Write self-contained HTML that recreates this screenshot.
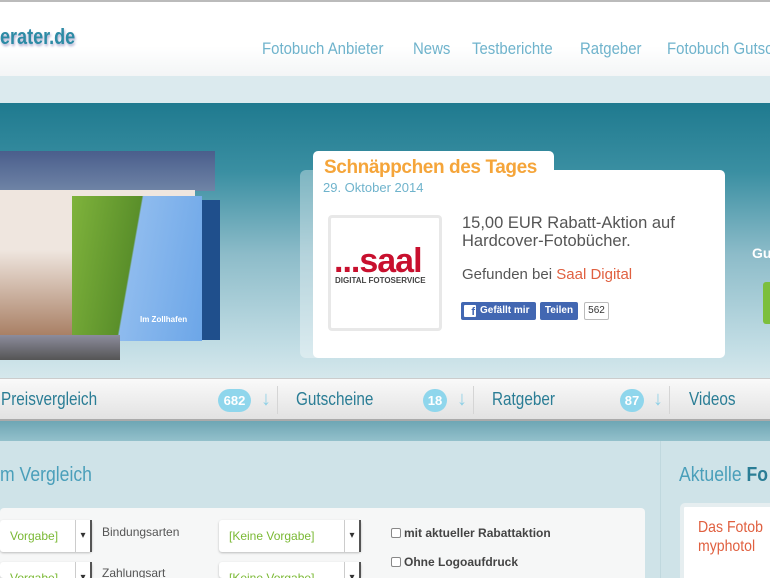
<!DOCTYPE html>
<html style="overflow:hidden"><head><meta charset="utf-8"><style>
*{margin:0;padding:0;box-sizing:border-box}
body{width:770px;height:578px;overflow:hidden;position:relative;font-family:"Liberation Sans",sans-serif;background:#cfe3e8}
.a{position:absolute}
.hdr{left:0;top:0;width:770px;height:76px;background:linear-gradient(#fff 60%,#f3f5f6);border-top:2px solid #bbb}
.band{left:0;top:76px;width:770px;height:27px;background:#dbeaee}
.hero{left:0;top:103px;width:770px;height:276px;background:linear-gradient(#1f7a8f 0%,#3a8fa2 25%,#8dbcc9 55%,#c5dfe6 90%,#d6e8ec 100%)}
.nav{left:0;top:378px;width:770px;height:43px;background:linear-gradient(#fafafa,#e2e2e2);border-top:1px solid #ccc;border-bottom:2px solid #aaa}
.tband{left:0;top:421px;width:770px;height:20px;background:linear-gradient(#6ea6b4,#93c0cb)}
.nl{color:#6fb3cc;font-size:17px;top:39px;white-space:nowrap;transform:scaleX(.88);transform-origin:0 0}
.ni{color:#2a7d95;font-size:18px;top:389px;white-space:nowrap;transform:scaleX(.85);transform-origin:0 0}
.badge{top:389px;height:23px;background:#8fd6ec;color:#fff;border-radius:12px;font-size:13px;font-weight:bold;text-align:center;line-height:23px}
.arr{top:388px;color:#8fd0e6;font-size:20px}
.sep{top:386px;width:1px;height:28px;background:#d5d5d5}
.sel{height:32px;background:#fff;border-radius:3px;box-shadow:0 1px 2px #bbb;color:#7ab934;font-size:12px;line-height:32px;padding-left:10px}
.sel:after{content:"▾";position:absolute;right:0;top:0;width:14px;height:32px;border-left:1px solid #ccc;border-right:2px solid #555;color:#333;font-size:10px;text-align:center}
.hd{color:#4a9fba;font-size:20px;top:464px;white-space:nowrap;transform:scaleX(.88);transform-origin:0 0}
</style></head><body>
<div class="a hdr"></div>
<div class="a" style="left:0;top:24px;font-weight:bold;font-size:22px;color:#2d8ba5;text-shadow:1px 2px 3px #aac;transform:scaleX(.82);transform-origin:0 0">erater.de</div>
<div class="a nl" style="left:262px">Fotobuch Anbieter</div>
<div class="a nl" style="left:413px">News</div>
<div class="a nl" style="left:472px">Testberichte</div>
<div class="a nl" style="left:580px">Ratgeber</div>
<div class="a nl" style="left:667px">Fotobuch Gutscheine</div>
<div class="a band"></div>
<div class="a hero"></div>
<div class="a" style="left:0;top:151px;width:215px;height:40px;background:linear-gradient(#4a5e8c,#6f84a6);"></div>
<div class="a" style="left:0;top:190px;width:195px;height:150px;background:linear-gradient(#efe6df 40%,#a57a5e)"></div>
<div class="a" style="left:72px;top:196px;width:130px;height:145px;background:linear-gradient(100deg,#7fb33c 0,#5a8f2a 45%,#8ebbee 46%,#6ca6e8 100%)"></div>
<div class="a" style="left:202px;top:200px;width:18px;height:140px;background:#1f4f8c"></div>
<div class="a" style="left:0;top:335px;width:120px;height:25px;background:linear-gradient(#8c8c9c,#555)"></div>
<div class="a" style="left:140px;top:315px;color:#fff;font-size:8px;font-weight:bold">Im Zollhafen</div>
<div class="a" style="left:300px;top:170px;width:28px;height:188px;background:rgba(255,255,255,.35);border-radius:6px"></div>
<div class="a" style="left:313px;top:170px;width:412px;height:188px;background:#fff;border-radius:5px"></div>
<div class="a" style="left:313px;top:151px;width:241px;height:30px;background:#fff;border-radius:5px 5px 0 0"></div>
<div class="a" style="left:324px;top:157px;color:#f5a53a;font-size:19px;font-weight:bold;letter-spacing:-.4px">Schnäppchen des Tages</div>
<div class="a" style="left:323px;top:180px;color:#6fb3cc;font-size:13px">29. Oktober 2014</div>
<div class="a" style="left:328px;top:215px;width:114px;height:116px;border:3px solid #e8e8e8;border-radius:4px;background:#fff"></div>
<div class="a" style="left:334px;top:244px;color:#c8102e;font-size:34px;font-weight:bold;letter-spacing:-1px;line-height:34px">...saal</div>
<div class="a" style="left:335px;top:276px;color:#444;font-size:8px;font-weight:bold">DIGITAL FOTOSERVICE</div>
<div class="a" style="left:462px;top:214px;color:#555;font-size:16.5px;line-height:18px">15,00 EUR Rabatt-Aktion auf<br>Hardcover-Fotobücher.</div>
<div class="a" style="left:462px;top:266px;color:#555;font-size:15px">Gefunden bei <span style="color:#e06040">Saal Digital</span></div>
<div class="a" style="left:461px;top:302px;width:75px;height:18px;background:#4267b2;border-radius:2px;color:#fff;font-size:10px;font-weight:bold;line-height:18px;padding-left:19px">Gefällt mir</div>
<div class="a" style="left:464px;top:305px;width:12px;height:12px;background:#fff;border-radius:1px;color:#4267b2;font-size:11px;font-weight:bold;line-height:14px;text-align:right;padding-right:1px">f</div>
<div class="a" style="left:540px;top:302px;width:38px;height:18px;background:#4267b2;border-radius:2px;color:#fff;font-size:10px;font-weight:bold;line-height:18px;text-align:center">Teilen</div>
<div class="a" style="left:584px;top:302px;width:25px;height:18px;border:1px solid #bbb;border-radius:2px;background:#fff;color:#333;font-size:10px;line-height:16px;text-align:center">562</div>
<div class="a" style="left:752px;top:245px;color:#fff;font-size:14px;font-weight:bold">Gu</div>
<div class="a" style="left:763px;top:282px;width:7px;height:42px;background:#7cbf3c;border-radius:3px 0 0 3px"></div>
<div class="a nav"></div>
<div class="a ni" style="left:1px">Preisvergleich</div>
<div class="a badge" style="left:218px;width:33px">682</div><div class="a arr" style="left:261px">↓</div><div class="a sep" style="left:277px"></div>
<div class="a ni" style="left:296px">Gutscheine</div>
<div class="a badge" style="left:423px;width:24px">18</div><div class="a arr" style="left:457px">↓</div><div class="a sep" style="left:473px"></div>
<div class="a ni" style="left:492px">Ratgeber</div>
<div class="a badge" style="left:620px;width:24px">87</div><div class="a arr" style="left:653px">↓</div><div class="a sep" style="left:669px"></div>
<div class="a ni" style="left:689px">Videos</div>
<div class="a tband"></div>
<div class="a hd" style="left:0">m Vergleich</div>
<div class="a" style="left:660px;top:441px;width:1px;height:137px;background:#c0d8de"></div>
<div class="a hd" style="left:679px">Aktuelle <b style="color:#2a7d95">Fo</b></div>
<div class="a" style="left:0;top:508px;width:645px;height:70px;background:#f6f7f7;border-radius:4px 4px 0 0"></div>
<div class="a sel" style="left:0;top:520px;width:92px">Vorgabe]</div>
<div class="a sel" style="left:0;top:562px;width:92px;height:16px">Vorgabe]</div>
<div class="a" style="left:102px;top:525px;color:#555;font-size:12px">Bindungsarten</div>
<div class="a" style="left:102px;top:566px;color:#555;font-size:12px">Zahlungsart</div>
<div class="a sel" style="left:219px;top:520px;width:142px">[Keine Vorgabe]</div>
<div class="a sel" style="left:219px;top:562px;width:142px;height:16px">[Keine Vorgabe]</div>
<div class="a" style="left:391px;top:526px;color:#444;font-size:12px;font-weight:bold"><span style="display:inline-block;width:10px;height:10px;border:1px solid #888;border-radius:2px;vertical-align:-1px;margin-right:3px;background:#fff"></span>mit aktueller Rabattaktion</div>
<div class="a" style="left:391px;top:555px;color:#444;font-size:12px;font-weight:bold"><span style="display:inline-block;width:10px;height:10px;border:1px solid #888;border-radius:2px;vertical-align:-1px;margin-right:3px;background:#fff"></span>Ohne Logoaufdruck</div>
<div class="a" style="left:680px;top:503px;width:90px;height:75px;background:#fff;border-radius:5px 0 0 0;border:4px solid #e6eef0;border-right:0;border-bottom:0"></div>
<div class="a" style="left:698px;top:518px;color:#e06040;font-size:16px;line-height:19px;white-space:nowrap;transform:scaleX(.88);transform-origin:0 0">Das Fotob<br>myphotol</div>
</body></html>
